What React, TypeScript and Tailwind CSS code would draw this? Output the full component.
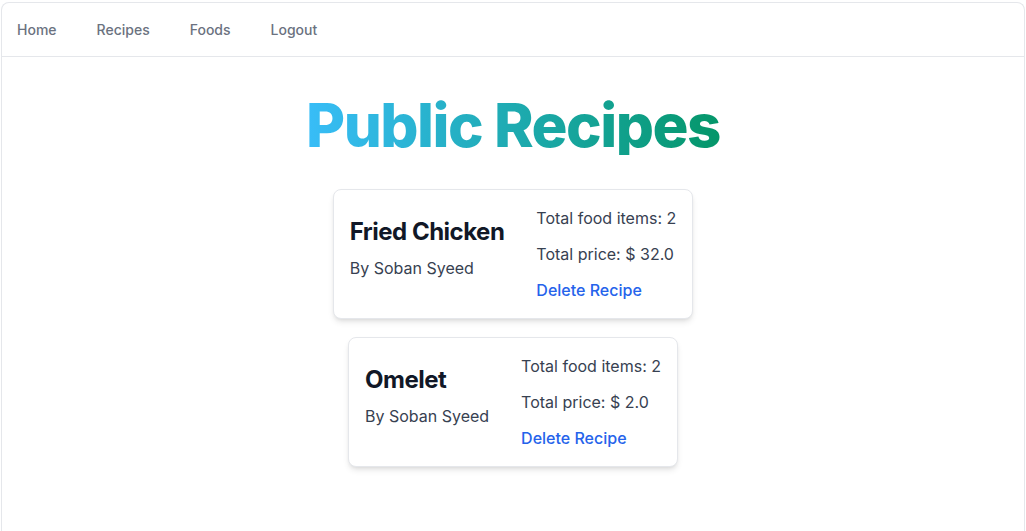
import React from "react";

const recipes = [
  { name: "Fried Chicken", author: "Soban Syeed", items: 2, price: "32.0" },
  { name: "Omelet", author: "Soban Syeed", items: 2, price: "2.0" },
];

function RecipeCard({ recipe }: { recipe: (typeof recipes)[number] }) {
  return (
    <div className="flex gap-8 rounded-lg border border-gray-200 bg-white p-4 shadow-md">
      <div className="flex flex-col justify-center">
        <h2 className="text-2xl font-bold tracking-[-0.5px] text-[#111827]">{recipe.name}</h2>
        <p className="mt-2 mb-3 text-base text-[#374151]">By {recipe.author}</p>
      </div>
      <div className="space-y-3 text-base text-[#374151]">
        <p>Total food items: {recipe.items}</p>
        <p>Total price: $ {recipe.price}</p>
        <button className="font-medium text-[#2563eb]">Delete Recipe</button>
      </div>
    </div>
  );
}

export default function App() {
  return (
    <div className="min-h-screen bg-white pt-[2px] pl-[1px] pr-[1px]" style={{ fontFamily: "Inter, 'Noto Sans', sans-serif" }}>
      <div className="min-h-[529px] rounded-t-lg border border-b-0 border-gray-200">
        <nav className="flex h-[54px] items-center gap-10 border-b border-gray-200 pl-[15px] text-sm font-medium text-[#6b7280]">
          <a href="#">Home</a>
          <a href="#">Recipes</a>
          <a href="#">Foods</a>
          <a href="#">Logout</a>
        </nav>
        <main className="flex flex-col items-center">
          <h1 className="mt-[38px] bg-gradient-to-r from-[#38bdf8] to-[#059669] bg-clip-text text-6xl font-extrabold tracking-tight text-transparent">
            Public Recipes
          </h1>
          <div className="mt-[34px] flex flex-col items-center gap-[18px]">
            {recipes.map((r) => (
              <RecipeCard key={r.name} recipe={r} />
            ))}
          </div>
        </main>
      </div>
    </div>
  );
}
